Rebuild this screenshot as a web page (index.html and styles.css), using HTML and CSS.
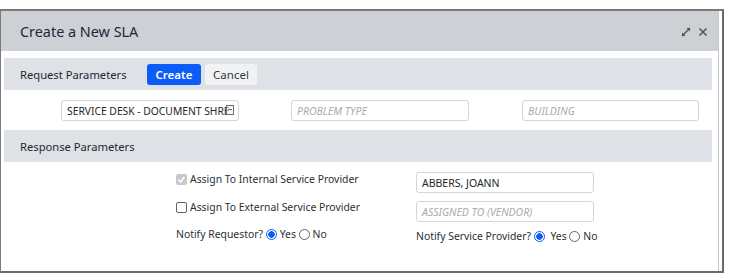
FILE: index.html
```html
<!DOCTYPE html>
<html>
<head>
<meta charset="utf-8">
<link rel="stylesheet" href="styles.css">
</head>
<body>
<div class="frame">
  <div class="dialog">
    <div class="header">
      <span class="title">Create a New SLA</span>
      <span class="tools">
        <svg class="expand" width="10" height="10" viewBox="0 0 10 10"><path d="M1 9 L9 1" stroke="#555" stroke-width="1.4"/><path d="M1 9 L1 5.5 L4.5 9 Z" fill="#555"/><path d="M9 1 L5.5 1 L9 4.5 Z" fill="#555"/></svg>
        <svg class="close" width="10" height="10" viewBox="0 0 10 10"><path d="M1.5 1.5 L8.5 8.5 M8.5 1.5 L1.5 8.5" stroke="#555" stroke-width="1.6"/></svg>
      </span>
    </div>
    <div class="body">
      <div class="bar">
        <span class="bar-title">Request Parameters</span>
        <span class="btn btn-primary">Create</span>
        <span class="btn btn-light">Cancel</span>
      </div>
      <div class="req-row">
        <div class="input input-1"><span class="val">SERVICE DESK - DOCUMENT SHRE</span><span class="lookup"></span></div>
        <div class="input input-2"><span class="ph">PROBLEM TYPE</span></div>
        <div class="input input-3"><span class="ph">BUILDING</span></div>
      </div>
      <div class="bar bar-resp">
        <span class="bar-title">Response Parameters</span>
      </div>
      <div class="resp">
        <div class="col-left">
          <div class="line line-1"><span class="cb cb-checked"><svg width="9" height="9" viewBox="0 0 9 9"><path d="M1.5 4.8 L3.6 6.8 L7.5 2" stroke="#fff" stroke-width="1.5" fill="none"/></svg></span>Assign To Internal Service Provider</div>
          <div class="line line-2"><span class="cb"></span>Assign To External Service Provider</div>
          <div class="line line-3">Notify Requestor? <span class="radio on"></span>Yes <span class="radio"></span>No</div>
        </div>
        <div class="col-right">
          <div class="input input-r1"><span class="val">ABBERS, JOANN</span></div>
          <div class="input input-r2"><span class="ph">ASSIGNED TO (VENDOR)</span></div>
          <div class="line line-3">Notify Service Provider? <span class="radio on"></span> Yes <span class="radio"></span>No</div>
        </div>
      </div>
    </div>
  </div>
  <div class="track"></div>
</div>
</body>
</html>
```

FILE: styles.css
```css
html, body {
  margin: 0;
  padding: 0;
  background: #fff;
}
body {
  font-family: "Noto Sans", "Open Sans", sans-serif;
  color: #222831;
  padding-top: 9px;
}
.frame {
  box-sizing: border-box;
  width: 724px;
  height: 264px;
  border-top: 2px solid #7a7a7a;
  border-left: 1px solid #7a7a7a;
  border-right: 2px solid #6a6a6a;
  border-bottom: 2px solid #6a6a6a;
  display: flex;
}
.dialog {
  flex: 1;
  display: flex;
  flex-direction: column;
  background: #fff;
}
.track {
  width: 3px;
  border-left: 1px solid #c4c6c8;
  background: #fff;
}
.header {
  height: 40px;
  background: #cdd1d6;
  display: flex;
  align-items: center;
  padding: 0 10px 0 19px;
}
.title {
  font-size: 14.4px;
  color: #1c2838;
  flex: 1;
  padding-top: 1px;
  white-space: nowrap;
}
.tools {
  display: flex;
  gap: 7px;
  align-items: center;
  padding-top: 1px;
}
.body {
  padding: 7px 6px 0 3px;
}
.bar {
  height: 32px;
  background: #dee1e5;
  display: flex;
  align-items: center;
  padding-left: 16px;
}
.bar-title {
  font-size: 11.2px;
  color: #1f2733;
  width: 127px;
  white-space: nowrap;
}
.btn {
  font-size: 11.5px;
  height: 21px;
  line-height: 21px;
  border-radius: 3px;
  text-align: center;
  box-sizing: border-box;
}
.btn-primary {
  background: #0b5cf9;
  color: #fff;
  width: 54px;
  font-weight: 600;
}
.btn-light {
  background: #f1f2f4;
  color: #33393f;
  width: 52px;
  margin-left: 4px;
}
.req-row {
  display: flex;
  margin: 10px 0 9px 57px;
  height: 21px;
}
.input {
  box-sizing: border-box;
  height: 21px;
  border: 1px solid #d3d6d9;
  border-radius: 3px;
  font-size: 10.5px;
  display: flex;
  align-items: center;
  padding-left: 5px;
  position: relative;
  white-space: nowrap;
  overflow: hidden;
}
.input-1 { width: 178px; }
.input-1 .val { font-size: 10.3px; }
.input-2 { width: 178px; margin-left: 52px; }
.input-3 { width: 177px; margin-left: 53px; }
.val { color: #23272b; }
.ph { color: #a6abb1; font-style: italic; }
.lookup {
  position: absolute;
  right: 4px;
  top: 4px;
  width: 8px;
  height: 10px;
  border: 1px solid #6e6e6e;
  box-sizing: border-box;
  background: linear-gradient(#6e6e6e, #6e6e6e) center 3px / 4px 1px no-repeat, rgba(240,240,240,0.6);
}
.bar-resp {
  height: 32px;
}
.resp {
  display: flex;
  padding-left: 172px;
  padding-top: 10px;
}
.col-left {
  width: 240px;
  font-size: 10.4px;
}
.col-right {
  font-size: 10.4px;
}
.line {
  display: flex;
  align-items: center;
  white-space: pre;
  color: #2b2f33;
  height: 14px;
}
.col-left .line-1 { margin-top: 0; }
.col-left .line-2 { margin-top: 14px; }
.col-left .line-3 { margin-top: 13px; }
.cb {
  box-sizing: border-box;
  width: 11px;
  height: 11px;
  border: 1px solid #5f6368;
  border-radius: 2px;
  margin-right: 3px;
  display: inline-flex;
  align-items: center;
  justify-content: center;
  background: #fff;
}
.cb-checked {
  background: #c7c9cc;
  border-color: #c7c9cc;
}
.radio {
  box-sizing: border-box;
  width: 11px;
  height: 11px;
  border: 1px solid #5f6368;
  border-radius: 50%;
  margin-right: 3px;
  display: inline-block;
  background: #fff;
}
.radio.on {
  border: 1px solid #0b5cf9;
  background: radial-gradient(circle, #0b5cf9 0, #0b5cf9 3px, #fff 3.5px);
}
.input-r1 { width: 178px; }
.input-r2 { width: 178px; margin-top: 8px; }
.col-right .line-3 { margin-top: 7px; }
```
